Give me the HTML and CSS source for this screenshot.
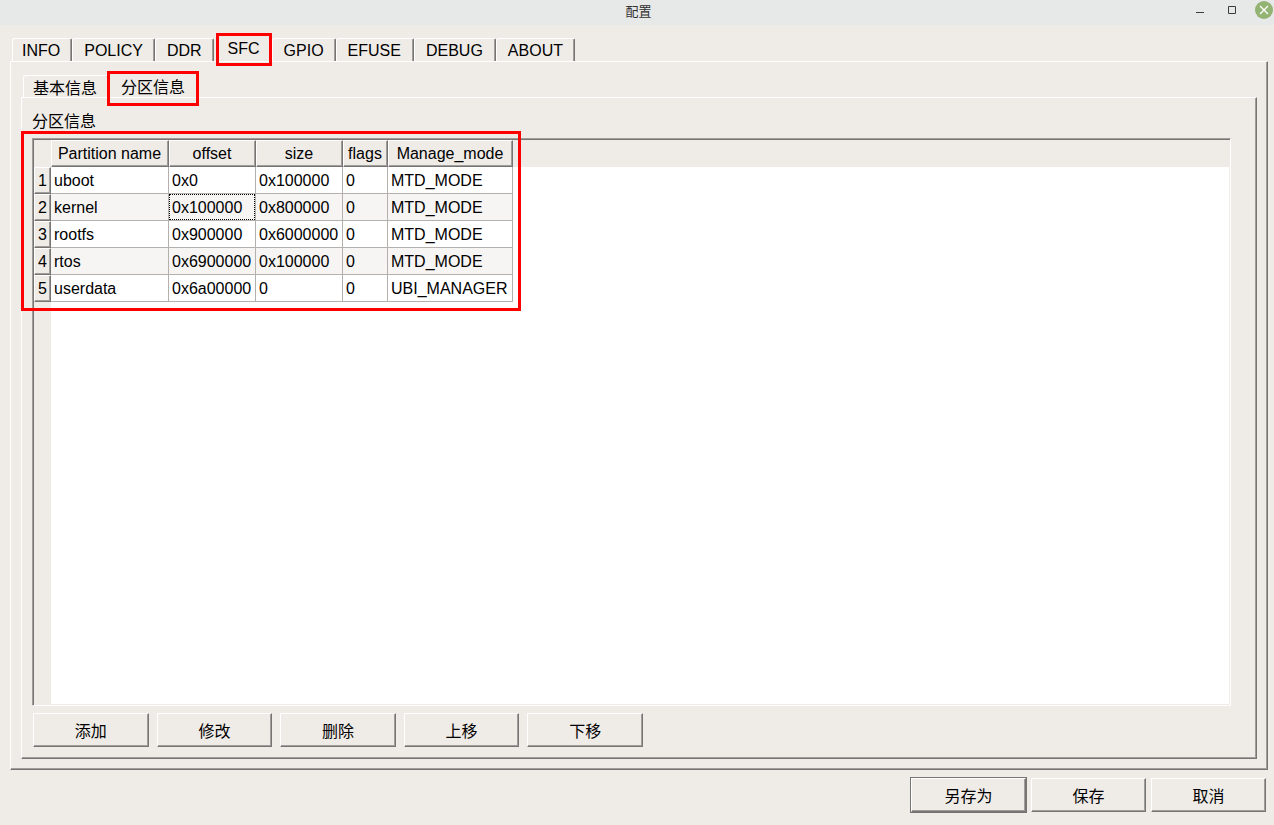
FILE: index.html
```html
<!DOCTYPE html>
<html lang="zh-CN">
<head>
<meta charset="utf-8">
<title>配置</title>
<link rel="stylesheet" href="styles.css">
</head>
<body>
<header class="titlebar">
  <h1 class="title">配置</h1>
  <div class="window-controls">
    <button class="wc" type="button" aria-label="最小化"><svg width="10" height="19" viewBox="0 0 10 19"><path d="M1 12.5h8" stroke="#3c3c3c"/></svg></button>
    <button class="wc" type="button" aria-label="最大化"><svg width="10" height="19" viewBox="0 0 10 19"><path d="M1.5 6.5h7v7h-7z" fill="none" stroke="#3c3c3c"/></svg></button>
    <button class="wc" type="button" aria-label="关闭"><svg width="18" height="19" viewBox="0 0 18 19"><circle cx="9" cy="10" r="9" fill="#92b372"/><path d="M5 6l8 8m0-8l-8 8" stroke="#fff" stroke-width="1.3"/></svg></button>
  </div>
</header>
<main class="dialog">
  <div class="tabs" role="tablist">
    <button class="tab" role="tab" type="button">INFO</button>
    <button class="tab" role="tab" type="button">POLICY</button>
    <button class="tab" role="tab" type="button">DDR</button>
    <button class="tab active marked" role="tab" type="button" aria-selected="true">SFC</button>
    <button class="tab" role="tab" type="button">GPIO</button>
    <button class="tab wide" role="tab" type="button">EFUSE</button>
    <button class="tab wide" role="tab" type="button">DEBUG</button>
    <button class="tab" role="tab" type="button">ABOUT</button>
  </div>
  <section class="pane outer">
    <div class="tabs" role="tablist">
      <button class="tab" role="tab" type="button">基本信息</button>
      <button class="tab active marked" role="tab" type="button" aria-selected="true">分区信息</button>
    </div>
    <section class="pane inner">
      <h2 class="group-title">分区信息</h2>
      <div class="view">
        <div class="header-fill"></div>
        <table class="grid">
          <thead>
            <tr><td class="corner"></td><th class="c-name" scope="col">Partition name</th><th class="c-num" scope="col">offset</th><th class="c-num" scope="col">size</th><th class="c-flags" scope="col">flags</th><th class="c-mode" scope="col">Manage_mode</th></tr>
          </thead>
          <tbody>
            <tr><th scope="row">1</th><td>uboot</td><td>0x0</td><td>0x100000</td><td>0</td><td>MTD_MODE</td></tr>
            <tr><th scope="row">2</th><td>kernel</td><td class="current">0x100000</td><td>0x800000</td><td>0</td><td>MTD_MODE</td></tr>
            <tr><th scope="row">3</th><td>rootfs</td><td>0x900000</td><td>0x6000000</td><td>0</td><td>MTD_MODE</td></tr>
            <tr><th scope="row">4</th><td>rtos</td><td>0x6900000</td><td>0x100000</td><td>0</td><td>MTD_MODE</td></tr>
            <tr><th scope="row">5</th><td>userdata</td><td>0x6a00000</td><td>0</td><td>0</td><td>UBI_MANAGER</td></tr>
          </tbody>
        </table>
        <div class="table-mark"></div>
      </div>
      <div class="actions">
        <button class="btn" type="button">添加</button>
        <button class="btn" type="button">修改</button>
        <button class="btn" type="button">删除</button>
        <button class="btn" type="button">上移</button>
        <button class="btn" type="button">下移</button>
      </div>
    </section>
  </section>
  <footer class="footer">
    <button class="btn default" type="button">另存为</button>
    <button class="btn" type="button">保存</button>
    <button class="btn" type="button">取消</button>
  </footer>
</main>
</body>
</html>
```
FILE: styles.css
```css
:root {
  --bg: #efebe7;
  --light: #fff;
  --mid: #a09e9b;
  --dark: #777573;
  --line: #b3b0ad;
}
* { box-sizing: border-box; }
body {
  margin: 0;
  min-height: 100vh;
  display: flex;
  flex-direction: column;
  background: var(--bg);
  color: #000;
  font: 16px/18px "Liberation Sans", "Noto Sans CJK SC", sans-serif;
}
button { font: inherit; color: inherit; }

.titlebar {
  display: grid;
  grid-template-columns: 1fr auto 1fr;
  height: 25px;
  padding: 0 1px 0 4px;
  background: #e7e8e8;
}
.title {
  grid-column: 2;
  margin: 0;
  font: 13px/22px "Noto Sans CJK SC", sans-serif;
  color: #303030;
}
.window-controls { display: flex; justify-content: flex-end; gap: 22px; }
.wc { height: 19px; padding: 0; border: 0; background: none; }
.wc:last-child { margin-left: -4px; }
.wc svg { display: block; }

.dialog {
  flex: 1;
  display: flex;
  flex-direction: column;
  padding: 12px 7px 13px 10px;
}
.tabs { display: flex; align-items: flex-end; height: 24px; }
.tab {
  position: relative;
  height: 23px;
  padding: 1px 11px 0;
  border: solid;
  border-width: 1px 1px 0 1px;
  border-color: var(--light) var(--dark) var(--light) var(--light);
  border-radius: 3px 2px 0 0;
  box-shadow: inset -1px 0 var(--mid);
  background: none;
  line-height: 18px;
  white-space: nowrap;
}
.tab:first-child { margin-left: 2px; padding-left: 9px; }
.tab.wide { padding-right: 12px; }
.tab.active {
  height: 24px;
  padding: 0 11px 2px 13px;
  border-color: transparent;
  box-shadow: none;
}
.marked::after, .table-mark {
  content: "";
  position: absolute;
  border: 3px solid #f00;
}
.marked::after { inset: -5px -1px -5px 1px; }

.pane {
  flex: 1;
  display: flex;
  flex-direction: column;
  margin-right: -1px;
  border: 1px solid;
  border-color: var(--light) var(--dark) var(--dark) var(--light);
  box-shadow: inset -1px -1px var(--mid);
}
.outer { padding: 11px 11px 10px 10px; }
.outer .tab { height: 22px; padding-top: 4px; padding-bottom: 0; }
.outer .tab.active { height: 24px; padding-left: 11px; }
.outer .marked::after { inset: -3px -3px -9px -3px; }
.inner { padding: 15px 25px 11px 10px; }
.group-title { margin: 0 0 7px; font: inherit; }

.view {
  position: relative;
  flex: 1;
  border: 1px solid;
  border-color: var(--mid) var(--light) var(--light) var(--mid);
  box-shadow: inset 1px 1px var(--dark), inset -1px -1px var(--bg);
  padding: 1px;
  background: linear-gradient(to right, var(--bg) 18px, #fff 18px);
}
.header-fill { height: 27px; margin-bottom: -27px; background: var(--bg); }
.grid { position: relative; table-layout: fixed; border-collapse: separate; border-spacing: 0; width: 479px; }
.grid tr { height: 27px; }
.grid td {
  padding: 1px 0 0 3px;
  border: solid var(--line);
  border-width: 0 1px 1px 0;
  background: #fff;
}
.grid tr:nth-child(even) td { background: #f6f5f3; }
.grid th {
  padding: 0;
  border: 1px solid;
  border-color: var(--light) var(--dark) var(--dark) var(--light);
  box-shadow: inset -1px -1px var(--mid);
  background: var(--bg);
  font-weight: normal;
  text-align: center;
}
.grid thead th { padding-right: 1px; }
.grid td.corner { width: 17px; border: 0; background: var(--bg); }
.c-name { width: 118px; }
.c-num { width: 87px; }
.c-flags { width: 45px; }
.c-mode { width: 125px; }
.grid .current { position: relative; }
.current::after {
  content: "";
  position: absolute;
  inset: 0;
  border: 1px dotted #000;
}
.table-mark { left: -12px; top: -8px; width: 500px; height: 180px; }

.actions { display: flex; gap: 8px; max-width: 611px; padding-left: 1px; margin-top: 7px; }
.btn {
  height: 34px;
  padding: 3px 0 0;
  border: 1px solid;
  border-color: var(--light) var(--dark) var(--dark) var(--light);
  box-shadow: inset -1px -1px var(--mid);
  background: var(--bg);
}
.actions .btn { flex: 1; }
.footer { display: flex; justify-content: flex-end; gap: 5px; padding: 8px 1px 0 0; }
.footer .btn { width: 115px; }
.footer .default { outline: 1px solid var(--dark); }
```
